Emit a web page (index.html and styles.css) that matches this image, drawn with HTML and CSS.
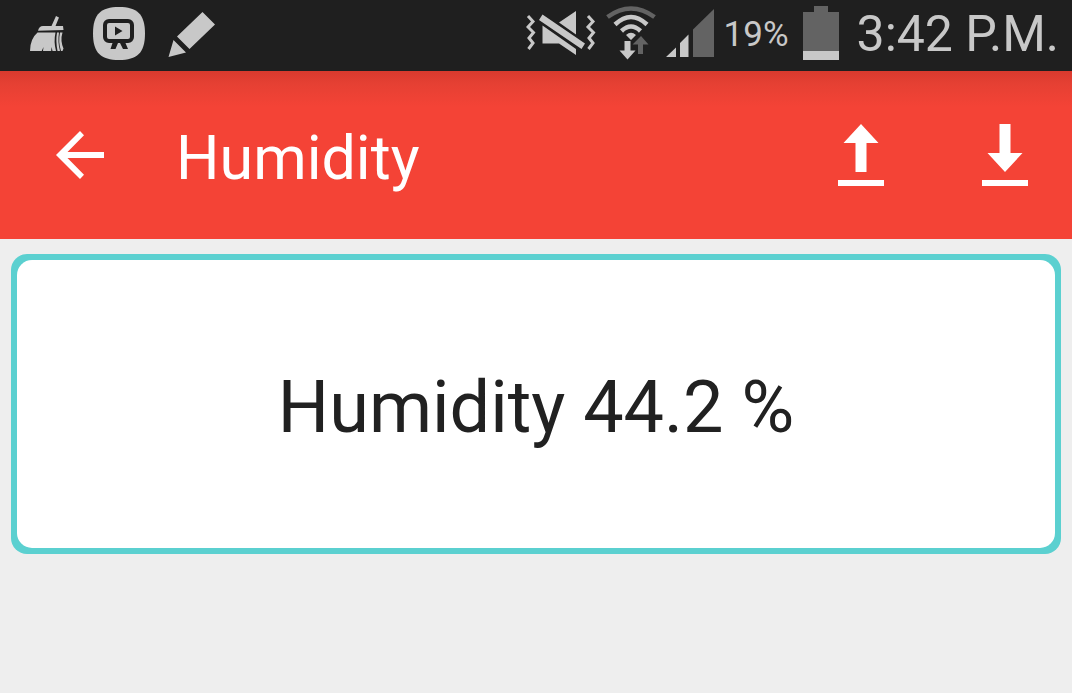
FILE: index.html
```html
<!DOCTYPE html>
<html lang="en">
<head>
<meta charset="utf-8">
<meta name="viewport" content="width=device-width, initial-scale=1">
<title>Humidity</title>
<link rel="stylesheet" href="styles.css">
</head>
<body>
<div class="status-bar">
  <div class="notifications">
    <svg class="icon-broom" width="36" height="36" viewBox="29 16 36 36" role="img" aria-label="Cleaner">
      <path d="M56 16l3 1.500-3.500 8.500H63l.5 4-25.500.8q1-4.800 5-4.800h8.500z"/>
      <path d="M37.500 32.500H55.500q-2 9 .5 18.500h-3.500l-1-4-.3 4H43l.5-4-1.800 4H30q0-12 7.500-18.500z"/>
      <path d="M57 32.500h2q-1.500 9 1 18.500h-2.500q-2-10-.5-18.500zM60 32.500h2.500q-2.500 8 1 16l-1 2.500h-1.500q-3-9-1-18.500z"/>
    </svg>
    <svg class="icon-player" width="54" height="54" viewBox="92 7 54 54" role="img" aria-label="Player">
      <path d="M119 7c18 0 26 7 26 26.500S137 60 119 60 93 53 93 33.500 101 7 119 7z"/>
      <rect x="105" y="21" width="27" height="20" rx="4" fill="none" stroke="#1f1f1f" stroke-width="4"/>
      <path d="M115 26.500v9l7.500-4.500zM112.500 43h5.500l-2.500 6h-5zM120 43h5.500l2.500 6h-5z" fill="#1f1f1f"/>
    </svg>
    <svg class="icon-pencil" width="48" height="46" viewBox="168 10 48 46" role="img" aria-label="Edit">
      <path d="M202.500 11L215 23.500l-25.500 24.500L177 35.500zM173.500 39L186 51.500 168.500 56z"/>
    </svg>
  </div>
  <div class="system">
    <svg class="icon-mute" width="70" height="46" viewBox="525 10 70 46" role="img" aria-label="Muted">
      <path d="M527 16l5 5.500-5 5.500 5.500 5.500L528 38l4 5-4.500 6M587 16l5 5.500-5 5.500 5.500 5.500L588 38l4 5-4.500 6" fill="none" stroke="#c8c8c8" stroke-width="3"/>
      <path d="M575 11v23.500L558 22.500zM541.500 25.500l33.500 23.500v6L558 43.500h-16.500zM541.500 14.500l42.500 29-3.500 5.500-42.500-29z"/>
    </svg>
    <svg class="icon-wifi" width="50" height="54" viewBox="604 6 50 54" role="img" aria-label="Wi-Fi">
      <path d="M605.500 17Q629 0 652.500 17" fill="none" stroke="#636363" stroke-width="4.500"/>
      <path d="M613 24.500q16-15 32 0M619.500 31q9.500-9 19 0" fill="none" stroke="#c8c8c8" stroke-width="4.500"/>
      <path d="M624 35q5-4.500 10 0l-5 5zM622.500 41h6v9.500h5l-8 9-8-9h5z"/>
      <path d="M639 36l7.500 8.500H641V54h-5v-9.500h-5.500z" fill="#636363"/>
    </svg>
    <svg class="icon-signal" width="48" height="48" viewBox="665 9 48 48" role="img" aria-label="Signal">
      <path d="M665 57l10-9.500V57zM679 57V43l8.500-8.500V57z"/>
      <path d="M692 57V29.500L713 9v48z" fill="#636363"/>
    </svg>
    <span class="charge">19%</span>
    <svg class="icon-battery" width="36" height="54" viewBox="0 0 36 54" role="img" aria-label="Battery">
      <path d="M11 0h14v6h11v39H0V6h11z" fill="#636363"/>
      <path d="M0 45h36v9H0z"/>
    </svg>
    <time class="clock" datetime="15:42">3:42 P.M.</time>
  </div>
</div>
<header class="app-bar">
  <button class="action" type="button" aria-label="Back">
    <svg width="48" height="48" viewBox="0 0 48 48"><path d="M24 0l4 4.200L11.500 21H48v6H11.500L28 43.800 24 48 0 24z"/></svg>
  </button>
  <h1 class="title">Humidity</h1>
  <div class="actions">
    <button class="action" type="button" aria-label="Upload">
      <svg width="48" height="62" viewBox="0 0 48 62"><path d="M24 0l17.500 19h-12v29h-11V19h-12zM1 56h46v6H1z"/></svg>
    </button>
    <button class="action" type="button" aria-label="Download">
      <svg width="48" height="62" viewBox="0 0 48 62"><path d="M18.500 0h11v29h12L24 48 6.500 29h12zM1 56h46v6H1z"/></svg>
    </button>
  </div>
</header>
<main class="content">
  <section class="card">
    <p class="reading">Humidity 44.2 %</p>
  </section>
</main>
</body>
</html>
```
FILE: styles.css
```css
* {
  box-sizing: border-box;
}

body {
  margin: 0;
  min-height: 100vh;
  background: #eeeeee;
  font-family: Roboto, "Liberation Sans", sans-serif;
}

svg {
  display: block;
  flex: none;
}

.status-bar {
  display: flex;
  justify-content: space-between;
  height: 71px;
  padding: 0 13px 0 29px;
  background: #1f1f1f;
  color: #c8c8c8;
  fill: #c8c8c8;
}

.notifications,
.system {
  display: flex;
  align-items: center;
  white-space: nowrap;
}

.notifications {
  gap: 22px;
  padding-bottom: 4px;
}

.icon-broom {
  margin-right: 5px;
}

.system {
  gap: 10px;
  padding-bottom: 6px;
}

.charge {
  padding-top: 4px;
  font-size: 35px;
  line-height: 40px;
}

.icon-battery {
  margin-left: 4px;
}

.clock {
  margin-left: 8px;
  padding-top: 2px;
  font-size: 50px;
  line-height: 56px;
}

.app-bar {
  display: flex;
  align-items: center;
  height: 168px;
  padding: 0 19px 0 32px;
  background: linear-gradient(#d93a2e, #e54033 12px, #f44336 36px);
  color: #ffffff;
}

.action {
  display: grid;
  place-items: center;
  width: 96px;
  height: 96px;
  padding: 0;
  border: 0;
  background: none;
  fill: #ffffff;
}

.title {
  flex: 1;
  margin: 0;
  padding: 6px 0 0 48px;
  font-size: 61px;
  font-weight: 400;
  line-height: 72px;
}

.actions {
  display: flex;
  gap: 48px;
}

.content {
  padding: 15px 11px;
}

.card {
  padding: 6px;
  border-radius: 16px;
  background: #5bd0d0;
}

.reading {
  margin: 0;
  padding: 106px 16px 98px;
  border-radius: 15px;
  background: #ffffff;
  color: #212121;
  font-size: 72px;
  line-height: 84px;
  text-align: center;
}
```
